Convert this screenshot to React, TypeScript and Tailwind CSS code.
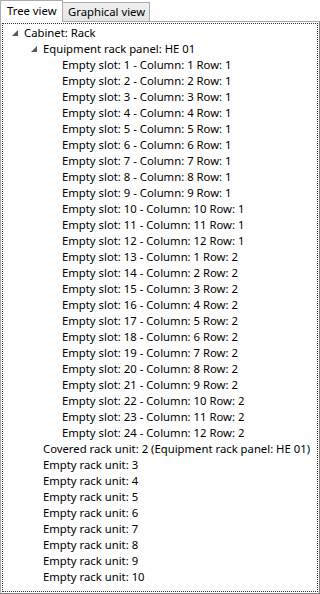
import React from "react";

type Node = { label: string; children?: Node[] };

const slots: Node[] = Array.from({ length: 24 }, (_, i) => ({
  label: `Empty slot: ${i + 1} - Column: ${(i % 12) + 1} Row: ${i < 12 ? 1 : 2}`,
}));

const tree: Node = {
  label: "Cabinet: Rack",
  children: [
    { label: "Equipment rack panel: HE 01", children: slots },
    { label: "Covered rack unit: 2 (Equipment rack panel: HE 01)" },
    ...[3, 4, 5, 6, 7, 8, 9, 10].map((n) => ({ label: `Empty rack unit: ${n}` })),
  ],
};

function Expander() {
  return (
    <svg width="6" height="6" viewBox="0 0 6 6" className="block">
      <path d="M6 0 L6 6 L0 6 Z" fill="#595959" />
    </svg>
  );
}

function TreeRow({ node, depth }: { node: Node; depth: number }) {
  const hasKids = !!node.children?.length;
  return (
    <>
      <div className="flex items-center h-[16px] whitespace-nowrap" style={{ paddingLeft: depth * 19 }}>
        <div className="w-[21px] h-[16px] flex items-center justify-center pl-[3px]">
          {hasKids && <Expander />}
        </div>
        <span className="leading-[16px] text-[#000]">{node.label}</span>
      </div>
      {hasKids && node.children!.map((c, i) => <TreeRow key={i} node={c} depth={depth + 1} />)}
    </>
  );
}

export default function App() {
  return (
    <div className="w-[320px] h-[594px] bg-white flex flex-col text-[11.3px] font-['Segoe_UI','Noto_Sans',sans-serif] text-black overflow-hidden">
      <div className="flex items-end h-[22px] shrink-0">
        <div className="relative z-10 w-[63px] h-[22px] bg-white border-l border-t border-r border-[#acacac] pl-[6px] leading-[20px]">
          Tree view
        </div>
        <div className="w-[87px] h-[20px] bg-gradient-to-b from-[#f0f0f0] to-[#e5e5e5] border-t border-r border-b border-[#acacac] pl-[5px] leading-[18px]">
          Graphical view
        </div>
      </div>
      <div className="flex-1 -mt-px border-t border-l border-[#acacac] border-r border-b border-r-[#828282] border-b-[#828282] p-px min-h-0">
        <div className="h-full border border-dotted border-[#333] pt-px overflow-hidden">
          <TreeRow node={tree} depth={0} />
        </div>
      </div>
    </div>
  );
}
